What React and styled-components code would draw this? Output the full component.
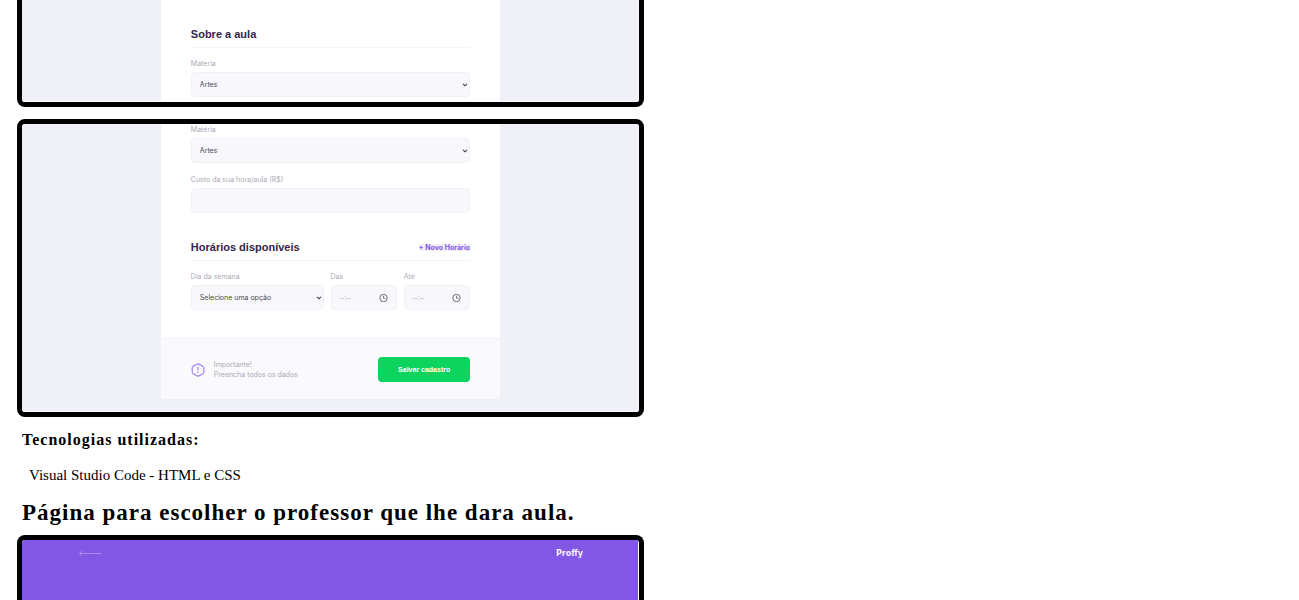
import React from "react";
import styled, { createGlobalStyle, css } from "styled-components";

const GlobalStyle = createGlobalStyle`
  *, *::before, *::after { box-sizing: border-box; }
  body {
    margin: 0;
    background: #fff;
    color: #000;
    font-family: "Liberation Serif", "Times New Roman", serif;
  }
`;

const Page = styled.main`
  display: grid;
  grid-template-columns: 1fr 1fr;
  column-gap: 11px;
  padding: 0 17px;
`;

const Column = styled.div`
  display: flex;
  flex-direction: column;
  min-width: 0;
`;

const Frame = styled.section`
  border: 5px solid #000;
  border-radius: 8px;
  background: #fff;
  overflow: hidden;
  font-family: "Liberation Sans", Arial, sans-serif;
  ${(p) =>
    p.$open === "top" &&
    css`
      border-top: 0;
      border-top-left-radius: 0;
      border-top-right-radius: 0;
      margin-bottom: 12px;
    `}
  ${(p) =>
    p.$open === "bottom" &&
    css`
      border-bottom: 0;
      border-bottom-left-radius: 0;
      border-bottom-right-radius: 0;
    `}
`;

const Backdrop = styled.div`
  background: #f0f0f7;
  box-shadow: inset -1px -1px #fafafd;
  padding-bottom: ${(p) => (p.$spaced ? "13px" : "0")};
`;

const Card = styled.form`
  width: 55%;
  margin: 0 auto;
  background: #fff;
`;

const CardBody = styled.div`
  display: flex;
  flex-direction: column;
  gap: 28px;
  padding: ${(p) => p.$pad};
`;

const Group = styled.div`
  display: flex;
  flex-direction: column;
  gap: ${(p) => p.$gap || "12px"};
`;

const GroupHeader = styled.div`
  display: flex;
  align-items: center;
  justify-content: space-between;
  padding-bottom: 7px;
  border-bottom: 1px solid #f3f3f8;
`;

const GroupTitle = styled.h3`
  margin: 0;
  font-size: 11px;
  line-height: 12px;
  color: #32264d;
`;

const AddButton = styled.button`
  border: 0;
  padding: 0;
  background: #f0f0f5;
  color: #8257e5;
  font: bold 7px/7px Inter, sans-serif;
`;

const TimeRow = styled.div`
  display: grid;
  grid-template-columns: 2fr 1fr 1fr;
  column-gap: 7px;
`;

const FieldBox = styled.div`
  display: flex;
  flex-direction: column;
  gap: 4px;
  min-width: 0;
`;

const Label = styled.label`
  font: 7px/9px Inter, sans-serif;
  color: #aca9b4;
`;

const ControlWrap = styled.div`
  position: relative;
  display: flex;
`;

const control = css`
  appearance: none;
  width: 100%;
  min-width: 0;
  height: 25px;
  margin: 0;
  padding: 0 8px;
  border: 1px solid #f1f1f7;
  border-radius: 4px;
  background: #f8f8fc;
  color: #4a4852;
  font: 7px/9px Inter, sans-serif;
`;

const Select = styled.select`
  ${control}
`;

const Input = styled.input`
  ${control}
  font-family: "Liberation Sans", Arial, sans-serif;
  &::placeholder {
    color: #a09cab;
    opacity: 1;
  }
`;

const ControlIcon = styled.svg`
  position: absolute;
  right: ${(p) => p.$right};
  top: 50%;
  transform: translateY(-50%);
  pointer-events: none;
`;

const CardFooter = styled.footer`
  display: flex;
  align-items: center;
  justify-content: space-between;
  padding: 18px 30px 17px;
  border-top: 1px solid #f0f0f6;
  background: #fafafc;
`;

const Notice = styled.div`
  display: flex;
  align-items: center;
  gap: 9px;
`;

const NoticeText = styled.p`
  margin: 0;
  font: 7px/10px Inter, sans-serif;
  color: #aca9b4;
`;

const SaveButton = styled.button`
  width: 92px;
  height: 25px;
  border: 0;
  border-radius: 4px;
  padding: 0;
  background: #0cd45f;
  color: #fff;
  font: bold 7px/9px "Liberation Sans", Arial, sans-serif;
`;

const Subtitle = styled.h3`
  margin: 13px 5px 0;
  font-size: 16px;
  line-height: 20px;
  letter-spacing: 1px;
`;

const Tools = styled.p`
  margin: 15px 12px 0;
  font-size: 15px;
  line-height: 20px;
`;

const Title = styled.h2`
  margin: 14px 5px 8px;
  font-size: 23px;
  line-height: 28px;
  letter-spacing: 1px;
`;

const Banner = styled.header`
  display: flex;
  align-items: flex-start;
  justify-content: space-between;
  min-height: 60px;
  margin-right: 1px;
  padding: 8px 55px 8px 56px;
  background: #8257e5;
`;

const BackLink = styled.a`
  display: flex;
  align-items: center;
  height: 10px;
`;

const Brand = styled.span`
  color: #f4effd;
  font: bold 8px/12px "DejaVu Sans", sans-serif;
`;

function Chevron() {
  return (
    <ControlIcon $right="2px" width="6" height="4" viewBox="0 0 6 4" aria-hidden="true">
      <path d="M1 .8 3 2.8 5 .8" fill="none" stroke="#444" strokeWidth="1.1" />
    </ControlIcon>
  );
}

function Clock() {
  return (
    <ControlIcon $right="9px" width="9" height="9" viewBox="0 0 9 9" aria-hidden="true">
      <circle cx="4.5" cy="4.5" r="3.7" fill="none" stroke="#707070" strokeWidth="1" />
      <path d="M4.5 2.2v2.5h2" fill="none" stroke="#707070" strokeWidth=".9" />
    </ControlIcon>
  );
}

function SelectField({ id, label, option }) {
  return (
    <FieldBox>
      <Label htmlFor={id}>{label}</Label>
      <ControlWrap>
        <Select id={id}>
          <option>{option}</option>
        </Select>
        <Chevron />
      </ControlWrap>
    </FieldBox>
  );
}

function TextField({ id, label, placeholder, clock }) {
  return (
    <FieldBox>
      <Label htmlFor={id}>{label}</Label>
      <ControlWrap>
        <Input id={id} type="text" placeholder={placeholder} />
        {clock && <Clock />}
      </ControlWrap>
    </FieldBox>
  );
}

export default function App() {
  return (
    <>
      <GlobalStyle />
      <Page>
        <Column>
          <Frame $open="top">
            <Backdrop>
              <Card>
                <CardBody $pad="28px 30px 5px">
                  <Group $gap="11px">
                    <GroupHeader>
                      <GroupTitle>Sobre a aula</GroupTitle>
                    </GroupHeader>
                    <SelectField id="subject" label="Matéria" option="Artes" />
                  </Group>
                </CardBody>
              </Card>
            </Backdrop>
          </Frame>

          <Frame>
            <Backdrop $spaced>
              <Card>
                <CardBody $pad="1px 30px 28px">
                  <Group>
                    <SelectField id="lesson-subject" label="Matéria" option="Artes" />
                    <TextField id="cost" label="Custo da sua hora/aula (R$)" />
                  </Group>
                  <Group $gap="11px">
                    <GroupHeader>
                      <GroupTitle>Horários disponíveis</GroupTitle>
                      <AddButton type="button">+ Novo Horário</AddButton>
                    </GroupHeader>
                    <TimeRow>
                      <SelectField id="weekday" label="Dia da semana" option="Selecione uma opção" />
                      <TextField id="from" label="Das" placeholder="--:--" clock />
                      <TextField id="to" label="Até" placeholder="--:--" clock />
                    </TimeRow>
                  </Group>
                </CardBody>
                <CardFooter>
                  <Notice>
                    <svg width="14" height="14" viewBox="0 0 14 14" aria-hidden="true">
                      <path
                        d="M6.2 1.1Q7 .7 7.8 1.1L11.8 3.3Q12.8 3.9 12.8 5V9Q12.8 10.1 11.8 10.7L7.8 12.9Q7 13.3 6.2 12.9L2.2 10.7Q1.2 10.1 1.2 9V5Q1.2 3.9 2.2 3.3Z"
                        fill="none"
                        stroke="#a583f0"
                        strokeWidth="1.2"
                        strokeLinejoin="round"
                      />
                      <path d="M7 3.8v3.8M7 8.8v1.2" stroke="#9a75ee" strokeWidth="1.2" />
                    </svg>
                    <NoticeText>
                      Importante!
                      <br />
                      Preencha todos os dados
                    </NoticeText>
                  </Notice>
                  <SaveButton type="button">Salvar cadastro</SaveButton>
                </CardFooter>
              </Card>
            </Backdrop>
          </Frame>

          <Subtitle>Tecnologias utilizadas:</Subtitle>
          <Tools>Visual Studio Code - HTML e CSS</Tools>
          <Title>Página para escolher o professor que lhe dara aula.</Title>

          <Frame $open="bottom">
            <Banner>
              <BackLink href="#" aria-label="Voltar">
                <svg width="24" height="7" viewBox="0 0 24 7" aria-hidden="true">
                  <path d="M4 1 1.5 3.5 4 6M1.5 3.5H23.5" fill="none" stroke="#a98af0" strokeWidth="1" />
                </svg>
              </BackLink>
              <Brand>Proffy</Brand>
            </Banner>
          </Frame>
        </Column>
      </Page>
    </>
  );
}
